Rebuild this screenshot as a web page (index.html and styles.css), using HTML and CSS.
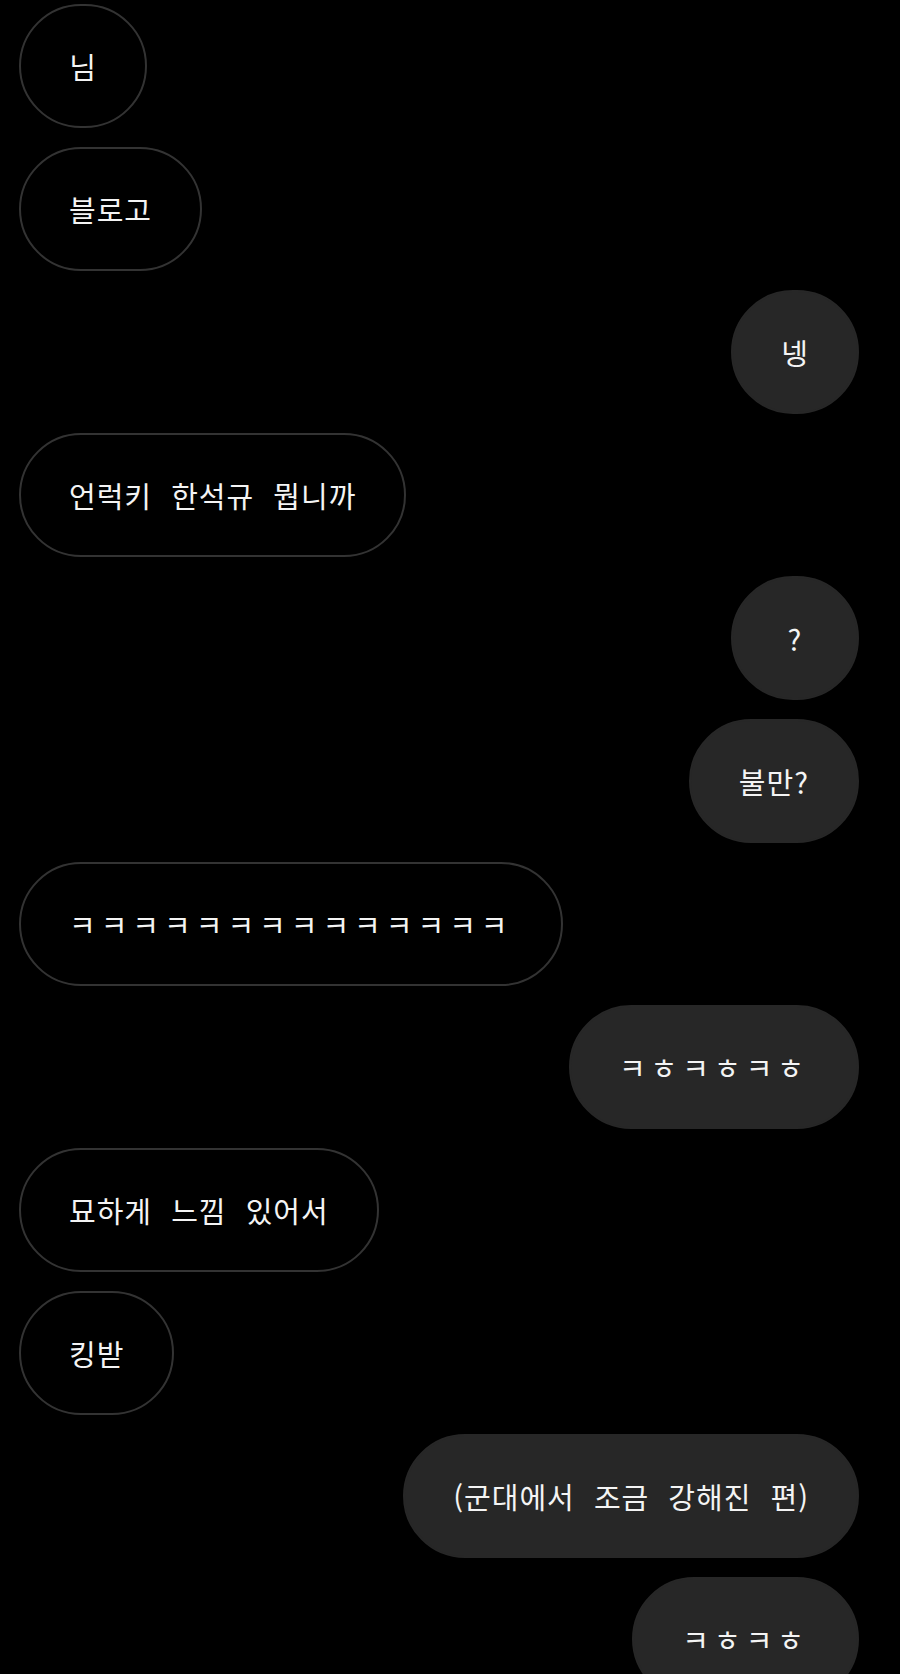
FILE: index.html
```html
<!DOCTYPE html>
<html lang="ko">
<head>
    <meta charset="UTF-8">
    <title>대화</title>
    <link rel="stylesheet" href="styles.css">
</head>
<body>
    <div class="chat">
        <div class="msg recv">님</div>
        <div class="msg recv">블로고</div>
        <div class="msg sent">넹</div>
        <div class="msg recv">언럭키 한석규 뭡니까</div>
        <div class="msg sent">?</div>
        <div class="msg sent">불만?</div>
        <div class="msg recv jamo">ㅋㅋㅋㅋㅋㅋㅋㅋㅋㅋㅋㅋㅋㅋ</div>
        <div class="msg sent jamo">ㅋㅎㅋㅎㅋㅎ</div>
        <div class="msg recv">묘하게 느낌 있어서</div>
        <div class="msg recv">킹받</div>
        <div class="msg sent">(군대에서 조금 강해진 편)</div>
        <div class="msg sent jamo">ㅋㅎㅋㅎ</div>
    </div>
</body>
</html>
```

FILE: styles.css
```css
body {
    margin: 0;
    background-color: #000;
    font-family: "Noto Sans CJK KR", "Noto Sans", sans-serif;
    color: #f4f4f4;
}

.chat {
    display: flex;
    flex-direction: column;
    gap: 19px;
    padding: 4px 41px 0 19px;
}

.msg {
    box-sizing: border-box;
    height: 124px;
    min-width: 128px;
    padding: 0 48px;
    border-radius: 62px;
    border: 2px solid #333;
    display: flex;
    align-items: center;
    justify-content: center;
    font-size: 29px;
    letter-spacing: 1px;
    word-spacing: 10px;
    white-space: nowrap;
}

.recv {
    align-self: flex-start;
    background-color: #000;
}

.sent {
    align-self: flex-end;
    background-color: #272727;
    border-color: #272727;
}

.jamo {
    font-size: 29px;
    letter-spacing: 5px;
}
```
